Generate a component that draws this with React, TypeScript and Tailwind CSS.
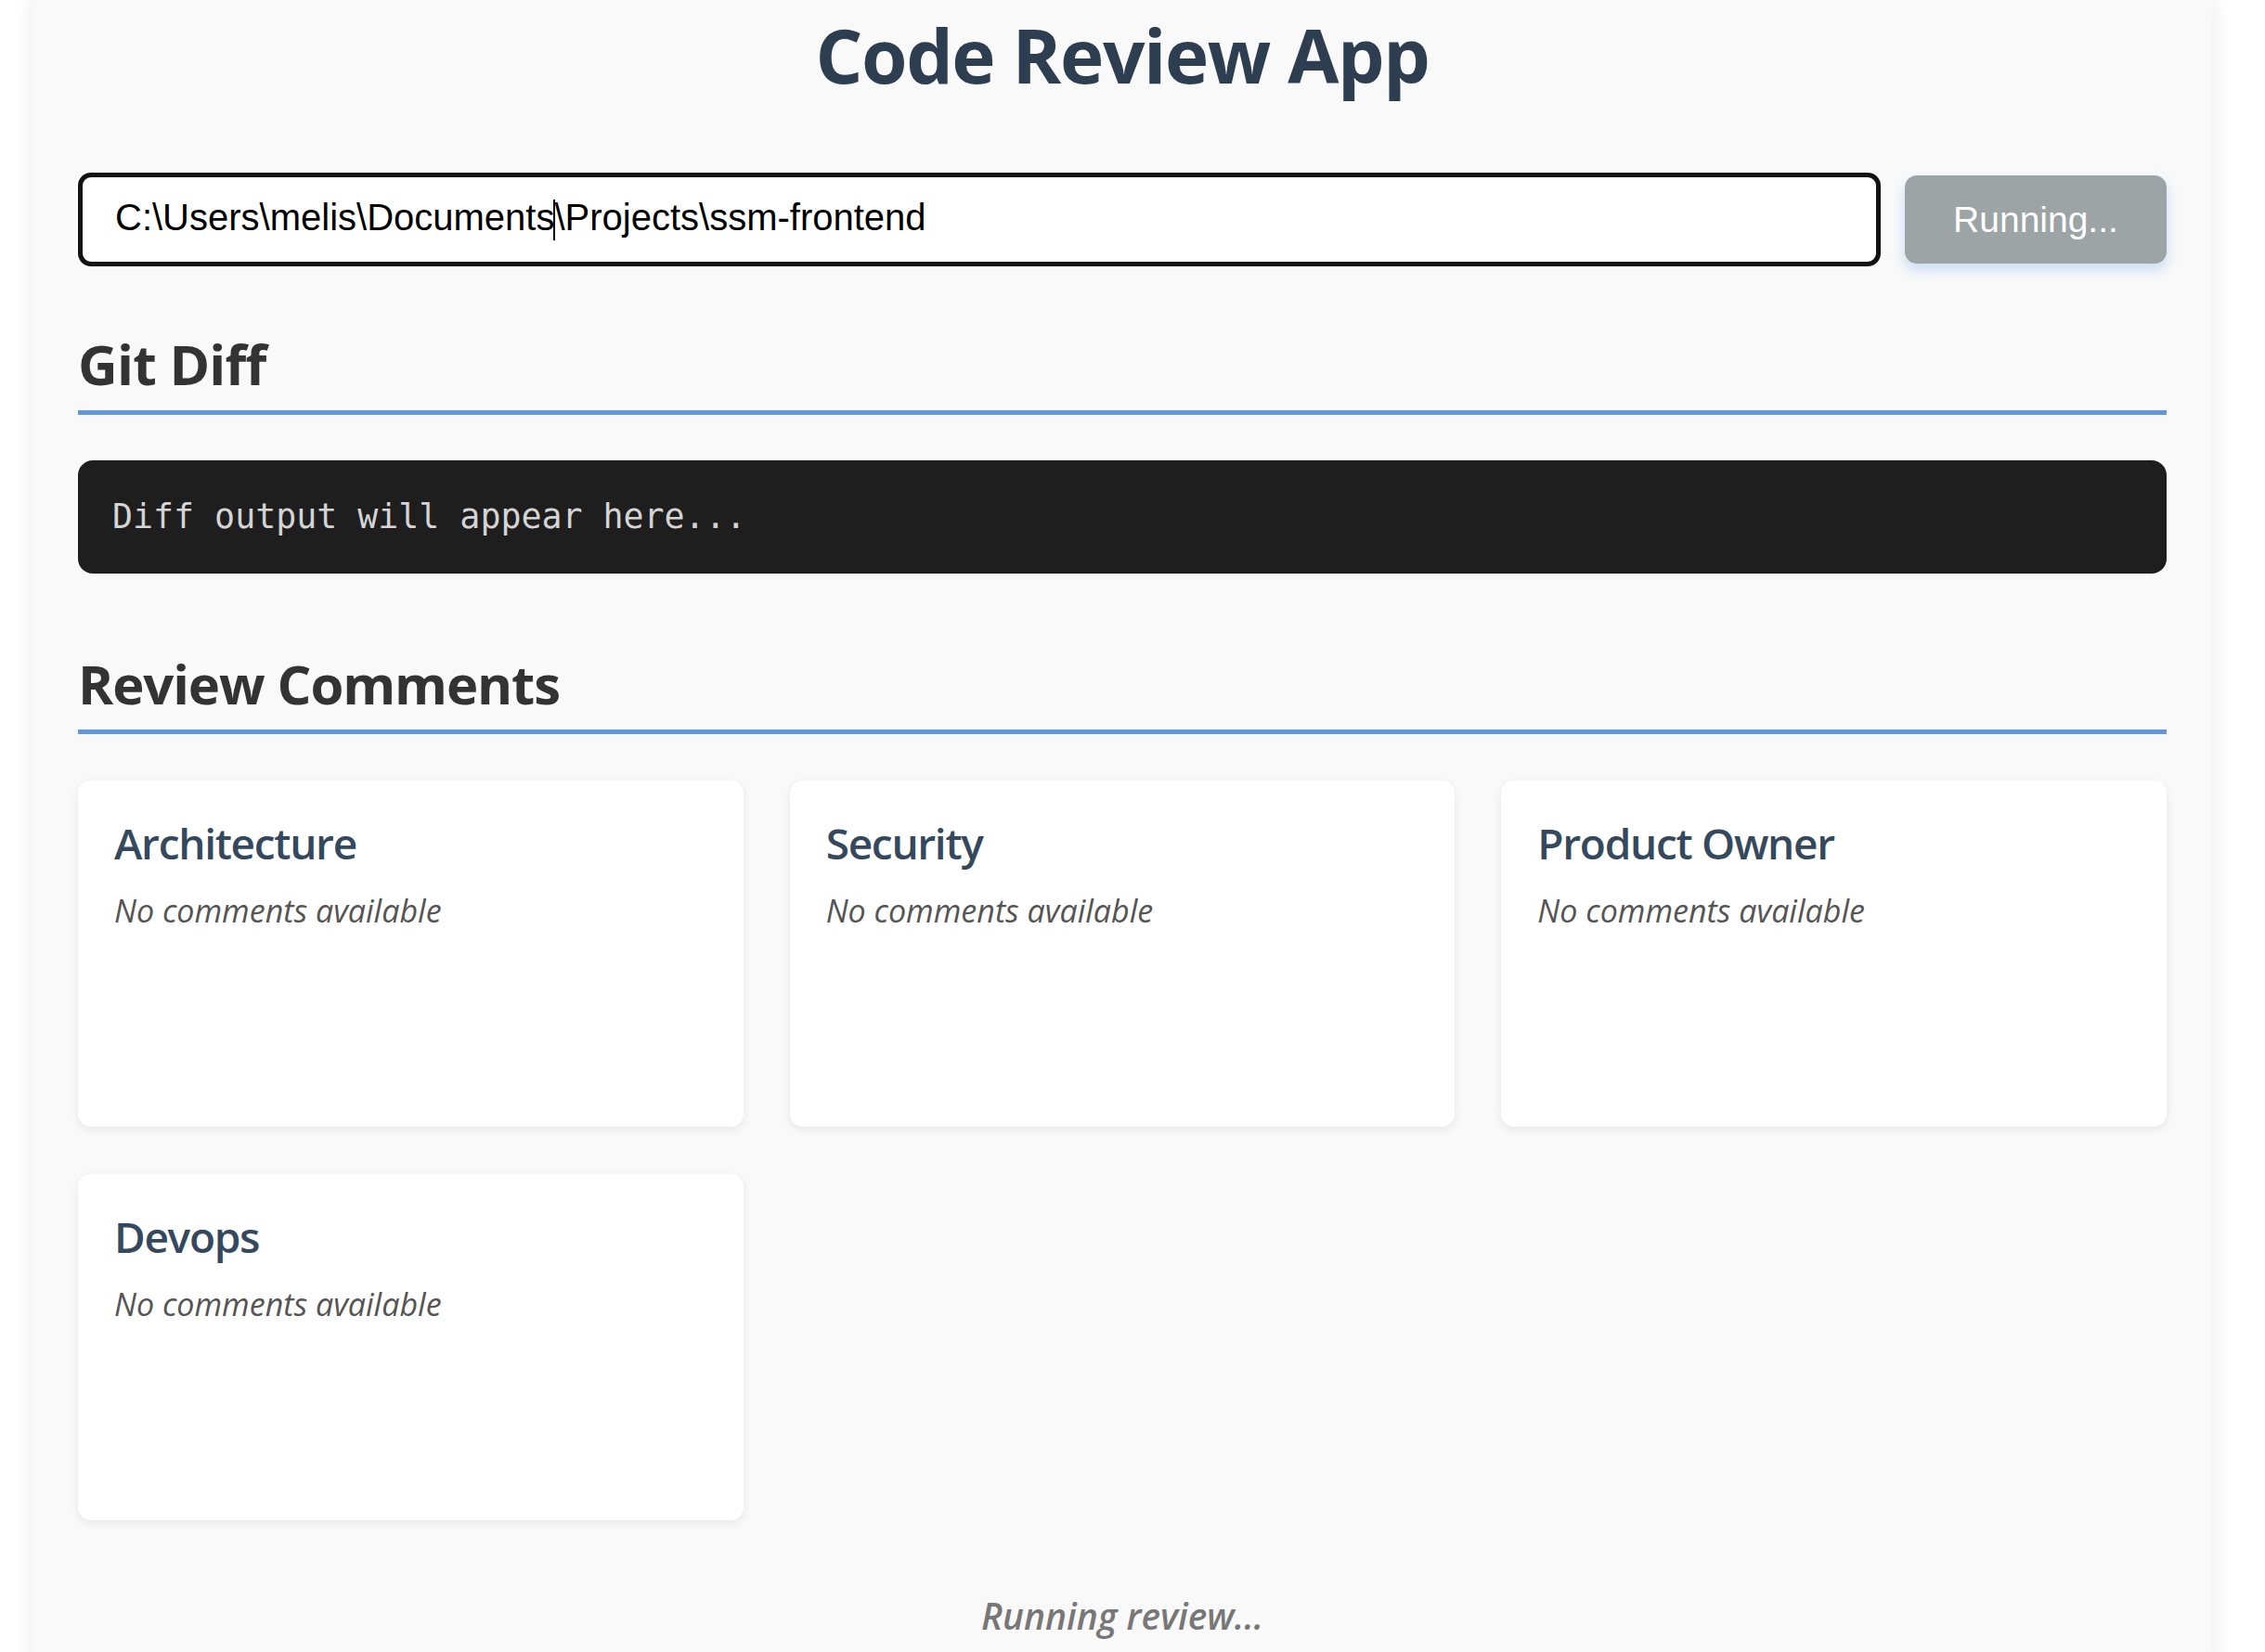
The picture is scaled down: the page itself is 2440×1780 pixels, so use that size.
import React from "react";

const sans = "font-['Open_Sans','Noto_Sans',sans-serif]";
const arial = "font-['Liberation_Sans',Arial,sans-serif]";

function Card({ title }: { title: string }) {
  return (
    <div className="h-[373px] rounded-[14px] bg-white px-[39px] pt-[44px] shadow-[0_3px_10px_rgba(0,0,0,0.08)]">
      <h3 className={`${sans} text-[46px] font-semibold leading-none tracking-[-1.3px] text-[#34495e]`}>{title}</h3>
      <p className={`${sans} mt-[33px] text-[34px] italic leading-none text-[#555555]`}>No comments available</p>
    </div>
  );
}

export default function App() {
  return (
    <div className="min-h-[1780px] w-[2440px] overflow-hidden bg-white">
      <div className="ml-[35px] min-h-[1780px] w-[2348px] bg-[#f9f9f9] px-[49px] pt-[19px] pb-[40px] shadow-[0_0_22px_rgba(0,0,0,0.09)]">
        <h1 className={`${sans} text-center text-[80px] font-bold leading-none tracking-[-1.4px] text-[#2c3e50]`}>Code Review App</h1>

        <div className="mt-[87px] flex items-center gap-[26px]">
          <div className="flex h-[101px] flex-1 items-center rounded-[14px] border-[5px] border-[#121212] bg-white pl-[35px] shadow-[0_0_0_2px_#ffffff]">
            <span className={`${arial} text-[40px] leading-none text-black whitespace-pre`}>
              C:\Users\melis\Documents
              <span className="-mx-[1px] inline-block h-[44px] w-[2px] bg-black align-middle" />
              \Projects\ssm-frontend
            </span>
          </div>
          <button className={`${arial} flex h-[95px] w-[282px] items-center justify-center rounded-[13px] bg-[#9ca4a6] text-[39px] leading-none text-white shadow-[0_7px_14px_rgba(74,144,226,0.28)]`}>
            Running...
          </button>
        </div>

        <h2 className={`${sans} mt-[76px] border-b-[5px] border-[#6398d8] pb-[20px] text-[59px] font-bold leading-none tracking-[-0.8px] text-[#333333]`}>Git Diff</h2>

        <div className="mt-[49px] rounded-[16px] bg-[#1e1e1e] px-[37px] py-[37px]">
          <pre className="font-['DejaVu_Sans_Mono','Liberation_Mono',monospace] text-[36.6px] leading-[48px] text-[#d4d4d4]">Diff output will appear here...</pre>
        </div>

        <h2 className={`${sans} mt-[90px] border-b-[5px] border-[#6398d8] pb-[20px] text-[58px] font-bold leading-none tracking-[-1.1px] text-[#333333]`}>Review Comments</h2>

        <div className="mt-[50px] grid grid-cols-3 gap-x-[50px] gap-y-[51px]">
          <Card title="Architecture" />
          <Card title="Security" />
          <Card title="Product Owner" />
          <Card title="Devops" />
        </div>

        <p className={`${sans} mt-[83px] text-center text-[39px] font-semibold italic leading-none text-[#777777]`}>Running review...</p>
      </div>
    </div>
  );
}
